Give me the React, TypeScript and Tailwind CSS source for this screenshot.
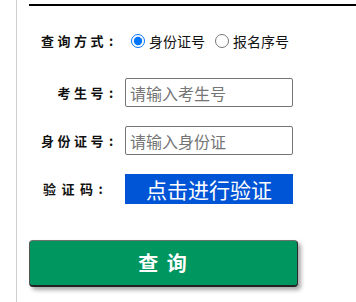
import React from 'react';

const labelCls =
  'w-[86px] shrink-0 flex justify-end items-center text-[13px] font-bold text-[#111]';

const inputCls =
  'ml-[10px] w-[168px] h-[29px] border border-[#767676] rounded-[2px] px-1 text-[16px] placeholder:text-[#757575] outline-none';

const Label: React.FC<{ text: string }> = ({ text }) => (
  <span className={labelCls}>
    <span className="tracking-[3.5px]">{text}</span>
    <span className="w-[8px] text-center">:</span>
  </span>
);

const App: React.FC = () => {
  return (
    <div className="w-[356px] h-[302px] bg-white overflow-hidden flex font-['Noto_Sans_CJK_SC','Noto_Sans',sans-serif]">
      <div className="w-4 shrink-0" />
      <div className="w-px shrink-0 bg-[#cfcfcf]" />
      <div className="flex-1 pl-3">
        <div className="mt-1 h-[2px] bg-black" />

        {/* query type */}
        <div className="mt-[25px] h-5 flex items-center">
          <Label text="查询方式" />
          <label className="ml-4 flex items-center text-[14px] text-[#111]">
            <input type="radio" name="mode" defaultChecked className="w-[14px] h-[14px] m-0 mr-1" />
            身份证号
          </label>
          <label className="ml-[10px] flex items-center text-[14px] text-[#111]">
            <input type="radio" name="mode" className="w-[14px] h-[14px] m-0 mr-1" />
            报名序号
          </label>
        </div>

        {/* exam no */}
        <div className="mt-[27px] flex items-center">
          <Label text="考生号" />
          <input placeholder="请输入考生号" className={inputCls} />
        </div>

        {/* id no */}
        <div className="mt-[19px] flex items-center">
          <Label text="身份证号" />
          <input placeholder="请输入身份证" className={inputCls} />
        </div>

        {/* captcha */}
        <div className="mt-[19px] flex items-center">
          <span className="w-[86px] shrink-0 pl-[14px] text-[13px] font-bold text-[#111] tracking-[5.5px]">验证码:</span>
          <button className="ml-[10px] w-[168px] h-[30px] bg-[#0055d6] text-white text-[21px] leading-none">
            点击进行验证
          </button>
        </div>

        {/* submit */}
        <button className="mt-[36px] w-[269px] h-[47px] rounded-[4px] bg-[#00965f] border border-t-[#707070] border-l-[#555] border-r-[#2a2a2a] border-b-[#222] border-b-2 shadow-[3px_3px_4px_rgba(0,0,0,0.35)] text-white text-[20px] font-bold tracking-[2px]">
          查 询
        </button>
      </div>
    </div>
  );
};

export default App;
